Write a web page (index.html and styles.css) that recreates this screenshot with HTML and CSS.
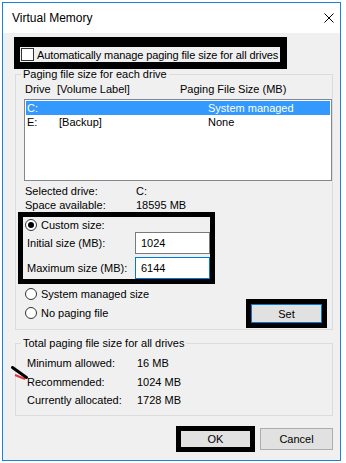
FILE: index.html
```html
<!DOCTYPE html>
<html lang="en">
<head>
  <meta charset="UTF-8">
  <meta name="viewport" content="width=device-width, initial-scale=1.0">
  <title>Virtual Memory</title>
  <link rel="stylesheet" href="styles.css">
</head>
<body>
<div class="window">
  <div class="titlebar">
    <span class="title">Virtual Memory</span>
    <svg class="close" width="10" height="10" viewBox="0 0 10 10">
      <path d="M0.5 0.5L9.5 9.5M9.5 0.5L0.5 9.5" stroke="#000" stroke-width="1" fill="none"/>
    </svg>
  </div>
  <div class="content">
    <div class="mark auto-manage">
      <span class="checkbox"></span>
      <span class="auto-text">Automatically manage paging file size for all drives</span>
    </div>

    <fieldset class="group drives">
      <legend>Paging file size for each drive</legend>
      <div class="drive-head">
        <span class="head-drive">Drive</span>
        <span class="head-label">[Volume Label]</span>
        <span>Paging File Size (MB)</span>
      </div>
      <div class="drive-list">
        <div class="drive-row selected">
          <span class="col-drive">C:</span>
          <span class="col-label"></span>
          <span>System managed</span>
        </div>
        <div class="drive-row">
          <span class="col-drive">E:</span>
          <span class="col-label">[Backup]</span>
          <span>None</span>
        </div>
      </div>
      <div class="drive-info">
        <div class="info-row"><span class="info-label">Selected drive:</span><span>C:</span></div>
        <div class="info-row"><span class="info-label">Space available:</span><span>18595 MB</span></div>
      </div>

      <div class="mark custom">
        <div class="option">
          <span class="radio checked"></span>
          <span>Custom size:</span>
        </div>
        <div class="size-row">
          <span class="size-label">Initial size (MB):</span>
          <span class="size-input">1024</span>
        </div>
        <div class="size-row second">
          <span class="size-label">Maximum size (MB):</span>
          <span class="size-input focused">6144</span>
        </div>
      </div>

      <div class="lower">
        <div class="options">
          <div class="option tall">
            <span class="radio"></span>
            <span>System managed size</span>
          </div>
          <div class="option tall">
            <span class="radio"></span>
            <span>No paging file</span>
          </div>
        </div>
        <div class="mark set-mark">
          <button class="set-btn">Set</button>
        </div>
      </div>
    </fieldset>

    <fieldset class="group totals">
      <legend>Total paging file size for all drives</legend>
      <div class="totals-body">
        <div class="total-row"><span class="total-label">Minimum allowed:</span><span>16 MB</span></div>
        <div class="total-row"><span class="total-label">Recommended:</span><span>1024 MB</span></div>
        <div class="total-row"><span class="total-label">Currently allocated:</span><span>1728 MB</span></div>
      </div>
    </fieldset>

    <div class="actions">
      <div class="mark ok-mark">
        <button class="ok-btn">OK</button>
      </div>
      <button class="cancel-btn">Cancel</button>
    </div>
  </div>

  <svg class="pen-mark" width="20" height="16" viewBox="0 0 20 16">
    <path d="M4 9L14 13" stroke="#e8343c" stroke-width="2" fill="none"/>
    <path d="M1.5 1.5L15.5 11.5" stroke="#000" stroke-width="3" stroke-linecap="round" fill="none"/>
  </svg>
</div>
</body>
</html>
```

FILE: styles.css
```css
body {
  margin: 0;
  background-color: #fff;
  font-family: "Liberation Sans", Arial, sans-serif;
  font-size: 11px;
  color: #000;
}

.window {
  position: relative;
  box-sizing: border-box;
  width: 339px;
  height: 459px;
  margin: 2px 0 0 2px;
  border: 1px solid #1883d7;
  background-color: #f0f0f0;
}

.titlebar {
  height: 30px;
  background-color: #fff;
  display: flex;
  align-items: center;
  justify-content: space-between;
  padding: 0 6px 0 9px;
  font-size: 12px;
}

.content {
  padding-top: 4px;
}

.mark {
  box-sizing: border-box;
  border-style: solid;
  border-color: #000;
}

/* automatic checkbox */
.auto-manage {
  width: 273px;
  height: 32px;
  margin-left: 11px;
  border-width: 10px 7px 7px 6px;
  display: flex;
  align-items: center;
  gap: 3px;
  padding-left: 1px;
  white-space: nowrap;
}

.checkbox {
  flex-shrink: 0;
  box-sizing: border-box;
  width: 13px;
  height: 13px;
  border: 1px solid #333;
  background-color: #fff;
}

.auto-text {
  flex-shrink: 0;
  letter-spacing: -0.1px;
}

/* group boxes */
.group {
  box-sizing: border-box;
  width: 318px;
  min-width: 0;
  margin: 0 0 0 12px;
  padding: 0;
  border: 1px solid #dcdcdc;
}

.group legend {
  padding: 0 2px;
  margin-left: 5px;
  line-height: 14px;
}

.drives {
  margin-top: -2px;
  padding: 1px 0;
}

.drive-head {
  display: flex;
  height: 14px;
  line-height: 14px;
  padding-left: 9px;
  margin-bottom: 3px;
}

.head-drive {
  width: 32px;
}

.head-label {
  width: 123px;
}

.drive-list {
  box-sizing: border-box;
  width: 308px;
  height: 82px;
  margin-left: 8px;
  padding: 1px;
  border: 1px solid #828790;
  background-color: #fff;
}

.drive-row {
  display: flex;
  height: 14px;
  line-height: 14px;
  padding-left: 1px;
}

.drive-row.selected {
  background-color: #3399ff;
  color: #fff;
}

.col-drive {
  width: 32px;
}

.col-label {
  width: 149px;
}

.drive-info {
  margin: 3px 0 0 9px;
}

.info-row {
  display: flex;
  height: 14px;
  line-height: 14px;
}

.info-label {
  width: 111px;
}

/* custom size block */
.custom {
  width: 197px;
  height: 72px;
  margin-left: 2px;
  border-width: 5px;
}

.option {
  display: flex;
  align-items: center;
  gap: 4px;
  height: 15px;
  padding-left: 2px;
}

.option.tall {
  height: 19px;
  padding-left: 0;
}

.radio {
  box-sizing: border-box;
  width: 12px;
  height: 12px;
  border: 1px solid #333;
  border-radius: 50%;
  background-color: #fff;
  display: flex;
  align-items: center;
  justify-content: center;
}

.radio.checked::after {
  content: "";
  width: 6px;
  height: 6px;
  border-radius: 50%;
  background-color: #000;
}

.size-row {
  display: flex;
  align-items: center;
  height: 22px;
  padding-left: 4px;
}

.size-row.second {
  margin-top: 3px;
}

.size-label {
  width: 108px;
}

.size-input {
  box-sizing: border-box;
  width: 75px;
  height: 22px;
  line-height: 20px;
  padding-left: 5px;
  border: 1px solid #7a7a7a;
  background-color: #fff;
}

.size-input.focused {
  border-color: #0078d7;
}

.lower {
  display: flex;
  justify-content: space-between;
}

.options {
  padding-left: 9px;
}

.set-mark {
  width: 81px;
  height: 29px;
  margin: 15px 5px 0 0;
  border-width: 5px;
}

button {
  font-family: inherit;
  font-size: 11px;
  color: #000;
  padding: 0;
  background-color: #e1e1e1;
}

.set-btn {
  width: 100%;
  height: 100%;
  border: 1px solid #0078d7;
}

/* totals */
.totals {
  margin-top: 6px;
}

.totals-body {
  padding: 4px 0 5px 11px;
}

.total-row {
  display: flex;
  line-height: 18.5px;
}

.total-label {
  width: 110px;
}

/* dialog buttons */
.actions {
  display: flex;
  justify-content: flex-end;
  align-items: center;
  gap: 5px;
  margin: 10px 7px 0 0;
}

.ok-mark {
  width: 79px;
  height: 26px;
  border-width: 5px;
}

.ok-btn {
  width: 100%;
  height: 100%;
  border: none;
}

.cancel-btn {
  width: 73px;
  height: 22px;
  border: 1px solid #adadad;
}

.pen-mark {
  position: absolute;
  left: 8px;
  top: 363px;
}
```
